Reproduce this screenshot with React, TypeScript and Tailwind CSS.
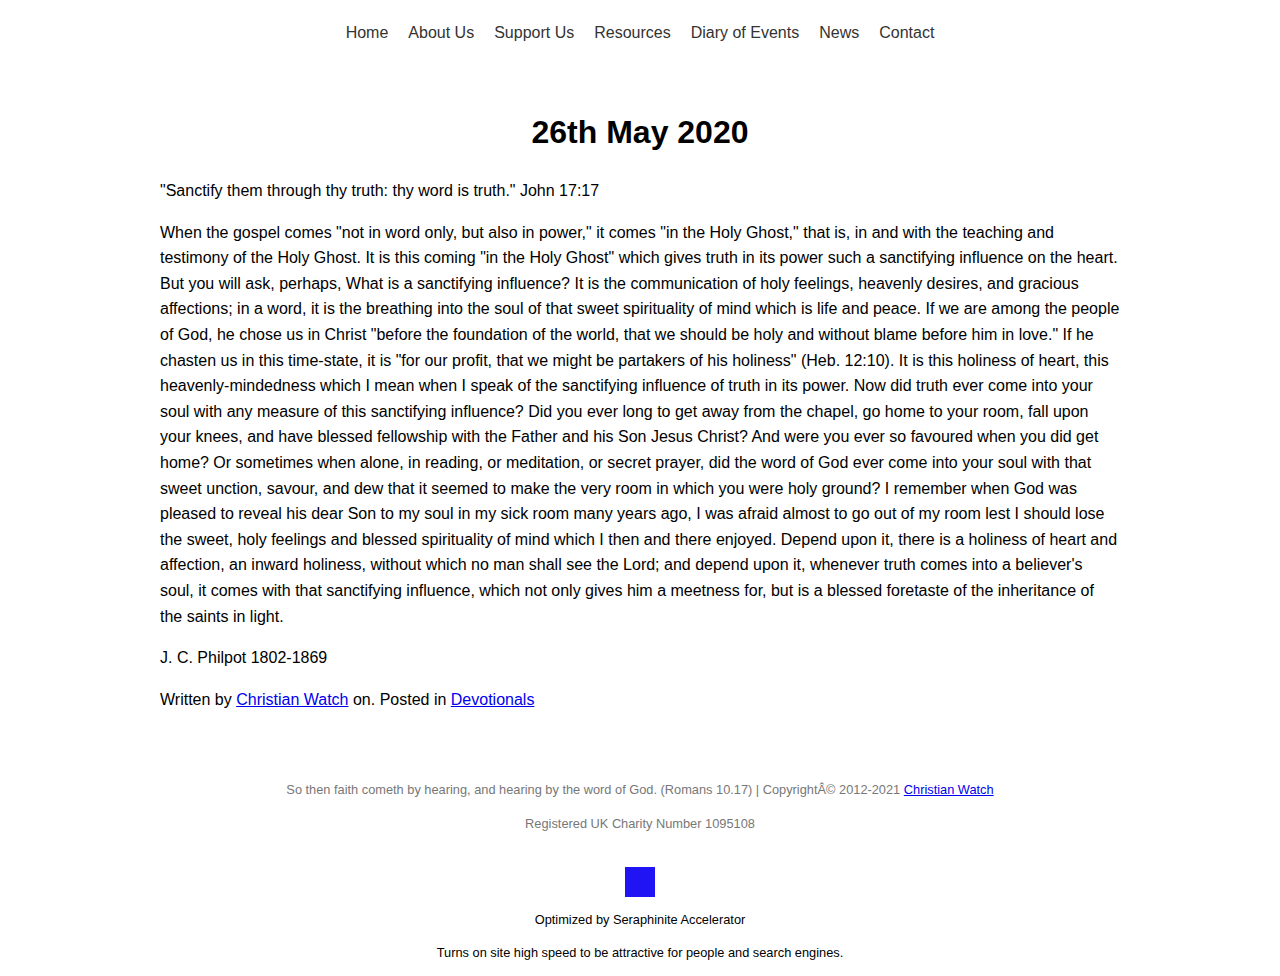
import React from "react";

const nav = ["Home", "About Us", "Support Us", "Resources", "Diary of Events", "News", "Contact"];

export default function App() {
  return (
    <div className="min-h-[976px] bg-white text-black" style={{ fontFamily: '"Liberation Sans", Arial, sans-serif' }}>
      <nav className="flex justify-center gap-5 pt-[21px] text-[16px] leading-6 text-[#333]">
        {nav.map((n) => (
          <a key={n} href="#" className="text-[#333] no-underline">{n}</a>
        ))}
      </nav>
      <main className="mx-auto w-[960px] text-[16px] leading-[25.6px]">
        <h1 className="mt-[68px] text-center text-[32px] font-bold leading-[38px]">26th May 2020</h1>
        <p className="mt-[27px]">"Sanctify them through thy truth: thy word is truth." John 17:17</p>
        <p className="mt-4">
          When the gospel comes "not in word only, but also in power," it comes "in the Holy Ghost," that is, in and with the teaching and testimony of the Holy Ghost. It is this coming "in the Holy Ghost" which gives truth in its power such a sanctifying influence on the heart. But you will ask, perhaps, What is a sanctifying influence? It is the communication of holy feelings, heavenly desires, and gracious affections; in a word, it is the breathing into the soul of that sweet spirituality of mind which is life and peace. If we are among the people of God, he chose us in Christ "before the foundation of the world, that we should be holy and without blame before him in love." If he chasten us in this time-state, it is "for our profit, that we might be partakers of his holiness" (Heb. 12:10). It is this holiness of heart, this heavenly-mindedness which I mean when I speak of the sanctifying influence of truth in its power. Now did truth ever come into your soul with any measure of this sanctifying influence? Did you ever long to get away from the chapel, go home to your room, fall upon your knees, and have blessed fellowship with the Father and his Son Jesus Christ? And were you ever so favoured when you did get home? Or sometimes when alone, in reading, or meditation, or secret prayer, did the word of God ever come into your soul with that sweet unction, savour, and dew that it seemed to make the very room in which you were holy ground? I remember when God was pleased to reveal his dear Son to my soul in my sick room many years ago, I was afraid almost to go out of my room lest I should lose the sweet, holy feelings and blessed spirituality of mind which I then and there enjoyed. Depend upon it, there is a holiness of heart and affection, an inward holiness, without which no man shall see the Lord; and depend upon it, whenever truth comes into a believer's soul, it comes with that sanctifying influence, which not only gives him a meetness for, but is a blessed foretaste of the inheritance of the saints in light.
        </p>
        <p className="mt-4">J. C. Philpot 1802-1869</p>
        <p className="mt-4">
          Written by <a href="#" className="text-[#0000ee] underline">Christian Watch</a> on. Posted in{" "}
          <a href="#" className="text-[#0000ee] underline">Devotionals</a>
        </p>
      </main>
      <footer className="mt-[68px] text-center text-[12.8px] leading-[20.8px] text-[#777]">
        <p>
          So then faith cometh by hearing, and hearing by the word of God. (Romans 10.17) | CopyrightÂ© 2012-2021{" "}
          <a href="#" className="text-[#0000ee] underline">Christian Watch</a>
        </p>
        <p className="mt-[13px]">Registered UK Charity Number 1095108</p>
      </footer>
      <div className="flex flex-col items-center pb-4 text-[12.8px] leading-5 text-black">
        <div className="mt-[32px] h-[30px] w-[30px] bg-[#2014f5]" />
        <p className="mt-[13px]">Optimized by Seraphinite Accelerator</p>
        <p className="mt-[13px]">Turns on site high speed to be attractive for people and search engines.</p>
      </div>
    </div>
  );
}
